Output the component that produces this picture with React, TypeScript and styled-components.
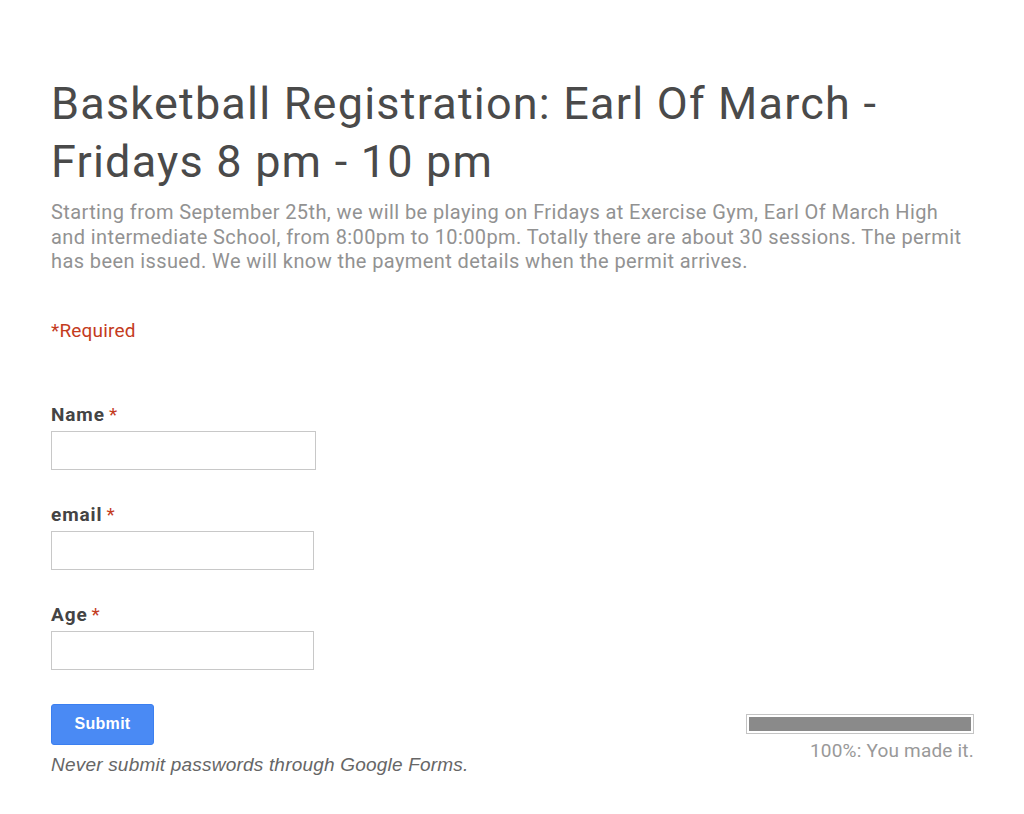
import * as React from 'react';
import styled, { createGlobalStyle } from 'styled-components';

const GlobalStyle = createGlobalStyle`
  html, body {
    margin: 0;
    padding: 0;
    background: #fff;
  }
  body {
    font-family: Roboto, "Liberation Sans", Arial, sans-serif;
  }
`;

const Page = styled.div`
  width: 923px;
  padding: 75px 0 40px 51px;
`;

const Title = styled.h1`
  margin: 0;
  font-family: Roboto, sans-serif;
  font-weight: 400;
  font-size: 45px;
  line-height: 58px;
  letter-spacing: 1.2px;
  color: #4a4a4a;
`;

const Description = styled.div`
  margin-top: 9px;
  font-size: 20px;
  line-height: 24.5px;
  letter-spacing: 0.4px;
  color: #929292;
`;

const Required = styled.div`
  margin-top: 45px;
  font-size: 19px;
  line-height: 24px;
  letter-spacing: 0.2px;
  color: #c43b1d;
`;

const Fields = styled.div`
  margin-top: 60px;
  display: flex;
  flex-direction: column;
  gap: 33px;
`;

const Field = styled.div`
  display: flex;
  flex-direction: column;
`;

const Label = styled.label`
  font-size: 19px;
  line-height: 24px;
  font-weight: 700;
  letter-spacing: 0.9px;
  color: #444;
`;

const Star = styled.span`
  color: #c43b1d;
  font-weight: 400;
  margin-left: 4px;
`;

const TextInput = styled.input<{ $w: number }>`
  box-sizing: border-box;
  margin-top: 4px;
  width: ${(p) => p.$w}px;
  height: 39px;
  border: 1px solid #c8c8c8;
  background: #fff;
  padding: 0 8px;
  font-size: 16px;
  outline: none;
`;

const Footer = styled.div`
  margin-top: 34px;
  display: flex;
  justify-content: space-between;
  align-items: flex-start;
`;

const SubmitCol = styled.div`
  display: flex;
  flex-direction: column;
`;

const SubmitButton = styled.button`
  width: 103px;
  height: 41px;
  border: 1px solid #3b7ff0;
  border-radius: 3px;
  background: #4a8af4;
  color: #fff;
  font-family: "Liberation Sans", Arial, sans-serif;
  font-weight: 700;
  font-size: 16px;
  letter-spacing: 0.3px;
  cursor: pointer;
`;

const Note = styled.div`
  margin-top: 8px;
  font-family: "Liberation Sans", Arial, sans-serif;
  font-style: italic;
  font-size: 19px;
  line-height: 24px;
  letter-spacing: 0.2px;
  color: #666;
`;

const ProgressCol = styled.div`
  margin-top: 10px;
  display: flex;
  flex-direction: column;
  align-items: flex-end;
`;

const ProgressTrack = styled.div`
  box-sizing: border-box;
  width: 228px;
  height: 20px;
  border: 1px solid #c4c4c4;
  padding: 2px;
  background: #fff;
`;

const ProgressFill = styled.div`
  height: 100%;
  background: #8a8a8a;
`;

const ProgressText = styled.div`
  margin-top: 5px;
  font-size: 19px;
  line-height: 24px;
  letter-spacing: 0.2px;
  color: #999;
`;

const fields = [
  { label: 'Name', width: 265 },
  { label: 'email', width: 263 },
  { label: 'Age', width: 263 }
];

export default function App() {
  const percent = 100;
  return (
    <>
      <GlobalStyle />
      <Page>
        <Title>Basketball Registration: Earl Of March - Fridays 8 pm - 10 pm</Title>
        <Description>
          Starting from September 25th, we will be playing on Fridays at Exercise Gym, Earl Of March High and
          intermediate School, from 8:00pm to 10:00pm. Totally there are about 30 sessions. The permit has been
          issued. We will know the payment details when the permit arrives.
        </Description>
        <Required>*Required</Required>
        <Fields>
          {fields.map((f) => (
            <Field key={f.label}>
              <Label>
                {f.label}
                <Star>*</Star>
              </Label>
              <TextInput type="text" $w={f.width} />
            </Field>
          ))}
        </Fields>
        <Footer>
          <SubmitCol>
            <SubmitButton>Submit</SubmitButton>
            <Note>Never submit passwords through Google Forms.</Note>
          </SubmitCol>
          <ProgressCol>
            <ProgressTrack>
              <ProgressFill style={{ width: `${percent}%` }} />
            </ProgressTrack>
            <ProgressText>{percent}%: You made it.</ProgressText>
          </ProgressCol>
        </Footer>
      </Page>
    </>
  );
}
